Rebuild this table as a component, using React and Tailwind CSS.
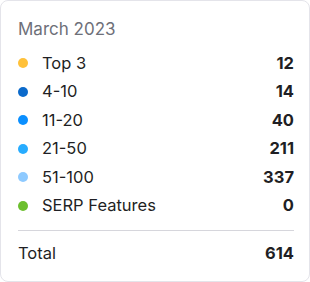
const rows = [
  { label: 'Top 3', value: 12, dot: 'bg-[#ffc13a]' },
  { label: '4-10', value: 14, dot: 'bg-[#0b6acb]' },
  { label: '11-20', value: 40, dot: 'bg-[#0a8fff]' },
  { label: '21-50', value: 211, dot: 'bg-[#27acff]' },
  { label: '51-100', value: 337, dot: 'bg-[#8ecaff]' },
  { label: 'SERP Features', value: 0, dot: 'bg-[#6cbf2e]' }
]

const App = () => {
  return (
    <div className="w-[310px] h-[282px] bg-white font-['Inter',sans-serif]">
      <div className="h-full rounded-lg border border-[#e4e4ea] pl-[17px] pr-[15px] pt-[16px]">
        <div className="text-[17px] leading-[24px] text-[#6e7079]">March 2023</div>

        <div className="mt-[8px]">
          {rows.map((row) => (
            <div key={row.label} className="flex items-center h-[28.5px] text-[16.5px] text-[#1f1f24]">
              <span className={`w-[10px] h-[10px] rounded-full ${row.dot}`} />
              <span className="ml-[14px] flex-1">{row.label}</span>
              <span className="font-bold">{row.value}</span>
            </div>
          ))}
        </div>

        {/* Total */}
        <div className="mt-[10px] border-t border-[#d6d6dc] pt-[10px] flex items-center h-[36px] text-[16.5px] text-[#1f1f24]">
          <span className="flex-1">Total</span>
          <span className="font-bold">614</span>
        </div>
      </div>
    </div>
  )
}

export default App
